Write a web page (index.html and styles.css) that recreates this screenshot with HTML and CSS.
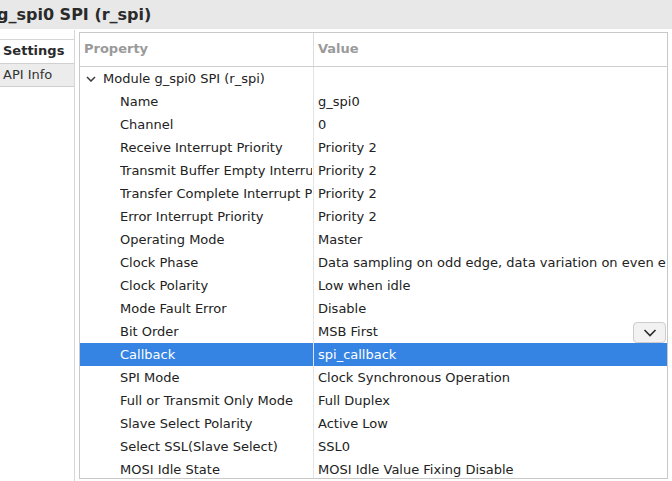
FILE: index.html
```html
<!DOCTYPE html>
<html>
<head>
<meta charset="utf-8">
<link rel="stylesheet" href="styles.css">
</head>
<body>
<div class="titlebar"><span class="title">g_spi0 SPI (r_spi)</span></div>
<div class="main">
  <div class="side">
    <div class="tab tab-active">Settings</div>
    <div class="tab tab-inactive">API Info</div>
  </div>
  <div class="frame">
    <div class="row header">
      <div class="cell c1"><span class="hdr">Property</span></div>
      <div class="cell c2"><span class="hdr">Value</span></div>
    </div>
    <div class="row">
      <div class="cell c1 group"><svg class="chev" width="10" height="6" viewBox="0 0 10 6"><path d="M1 1 L5 5 L9 1" fill="none" stroke="#3a3a3a" stroke-width="1.5"/></svg>Module g_spi0 SPI (r_spi)</div>
      <div class="cell c2"></div>
    </div>
    <div class="row"><div class="cell c1 prop">Name</div><div class="cell c2">g_spi0</div></div>
    <div class="row"><div class="cell c1 prop">Channel</div><div class="cell c2">0</div></div>
    <div class="row"><div class="cell c1 prop">Receive Interrupt Priority</div><div class="cell c2">Priority 2</div></div>
    <div class="row"><div class="cell c1 prop"><span class="clip">Transmit Buffer Empty Interru</span></div><div class="cell c2">Priority 2</div></div>
    <div class="row"><div class="cell c1 prop"><span class="clip">Transfer Complete Interrupt P</span></div><div class="cell c2">Priority 2</div></div>
    <div class="row"><div class="cell c1 prop">Error Interrupt Priority</div><div class="cell c2">Priority 2</div></div>
    <div class="row"><div class="cell c1 prop">Operating Mode</div><div class="cell c2">Master</div></div>
    <div class="row"><div class="cell c1 prop">Clock Phase</div><div class="cell c2">Data sampling on odd edge, data variation on even e</div></div>
    <div class="row"><div class="cell c1 prop">Clock Polarity</div><div class="cell c2">Low when idle</div></div>
    <div class="row"><div class="cell c1 prop">Mode Fault Error</div><div class="cell c2">Disable</div></div>
    <div class="row"><div class="cell c1 prop">Bit Order</div><div class="cell c2 combo"><span>MSB First</span><span class="dd"><svg width="14" height="8" viewBox="0 0 14 8"><path d="M1.5 1 L7 6.5 L12.5 1" fill="none" stroke="#2a2a2a" stroke-width="1.6"/></svg></span></div></div>
    <div class="row selected"><div class="cell c1 prop">Callback</div><div class="cell c2">spi_callback</div></div>
    <div class="row"><div class="cell c1 prop">SPI Mode</div><div class="cell c2">Clock Synchronous Operation</div></div>
    <div class="row"><div class="cell c1 prop">Full or Transmit Only Mode</div><div class="cell c2">Full Duplex</div></div>
    <div class="row"><div class="cell c1 prop">Slave Select Polarity</div><div class="cell c2">Active Low</div></div>
    <div class="row"><div class="cell c1 prop">Select SSL(Slave Select)</div><div class="cell c2">SSL0</div></div>
    <div class="row"><div class="cell c1 prop">MOSI Idle State</div><div class="cell c2">MOSI Idle Value Fixing Disable</div></div>
  </div>
</div>
</body>
</html>
```
FILE: styles.css
```css
* { box-sizing: border-box; }
html, body {
  margin: 0;
  padding: 0;
  background: #ffffff;
  width: 672px;
  height: 481px;
  overflow: hidden;
  font-family: "DejaVu Sans", sans-serif;
  font-size: 13px;
  color: #222222;
}
.titlebar {
  height: 29px;
  background: #e8e8e8;
  display: flex;
  align-items: center;
  overflow: hidden;
}
.title {
  font-weight: bold;
  font-size: 16px;
  color: #2a2a2a;
  margin-left: -3px;
  margin-top: -1px;
}
.main {
  display: flex;
  align-items: flex-start;
  padding-top: 1px;
}
.side {
  width: 75px;
  height: 452px;
  border-right: 1px solid #d6d6d6;
  padding-top: 9px;
  flex: none;
}
.tab {
  height: 24px;
  line-height: 22px;
  padding-left: 3px;
  white-space: nowrap;
  overflow: hidden;
}
.tab-active {
  font-weight: bold;
  border-top: 1px solid #d6d6d6;
  color: #2a2a2a;
}
.tab-inactive {
  background: #ececec;
  border-top: 1px solid #d0d0d0;
  border-bottom: 1px solid #d0d0d0;
  color: #333333;
}
.frame {
  margin-left: 4px;
  margin-top: 2px;
  width: 589px;
  height: 447px;
  border: 1px solid #c9c9c9;
  overflow: hidden;
  flex: none;
}
.row {
  display: grid;
  grid-template-columns: 234px 1fr;
  height: 23px;
}
.cell {
  white-space: nowrap;
  overflow: hidden;
  line-height: 23px;
  height: 23px;
}
.c1 {
  border-right: 1px solid #e4e4e4;
}
.c2 {
  padding-left: 4px;
}
.clip {
  display: inline-block;
  max-width: 192px;
  overflow: hidden;
  vertical-align: top;
}
.header {
  height: 34px;
  border-bottom: 1px solid #cfcfcf;
}
.header .cell {
  height: 33px;
  line-height: 32px;
}
.header .c1 { border-right: 1px solid #dcdcdc; padding-left: 4px; }
.hdr {
  font-weight: bold;
  color: #9a9a9a;
}
.group {
  padding-left: 6px;
  display: flex;
  align-items: center;
}
.chev {
  margin-right: 7px;
  margin-top: 1px;
  flex: none;
}
.prop {
  padding-left: 40px;
}
.combo {
  display: flex;
  justify-content: space-between;
  align-items: flex-start;
  overflow: visible;
  padding-right: 1px;
}
.dd {
  width: 33px;
  height: 21px;
  margin-top: 2px;
  border: 1px solid #cdcdcd;
  border-radius: 4px;
  background: #f2f2f2;
  display: flex;
  align-items: center;
  justify-content: center;
  position: relative;
  z-index: 1;
}
.dd svg { display: block; }
.selected {
  background: #3584e4;
  color: #ffffff;
}
.selected .c1 { border-right: 1px solid #d8e6f8; }
```
